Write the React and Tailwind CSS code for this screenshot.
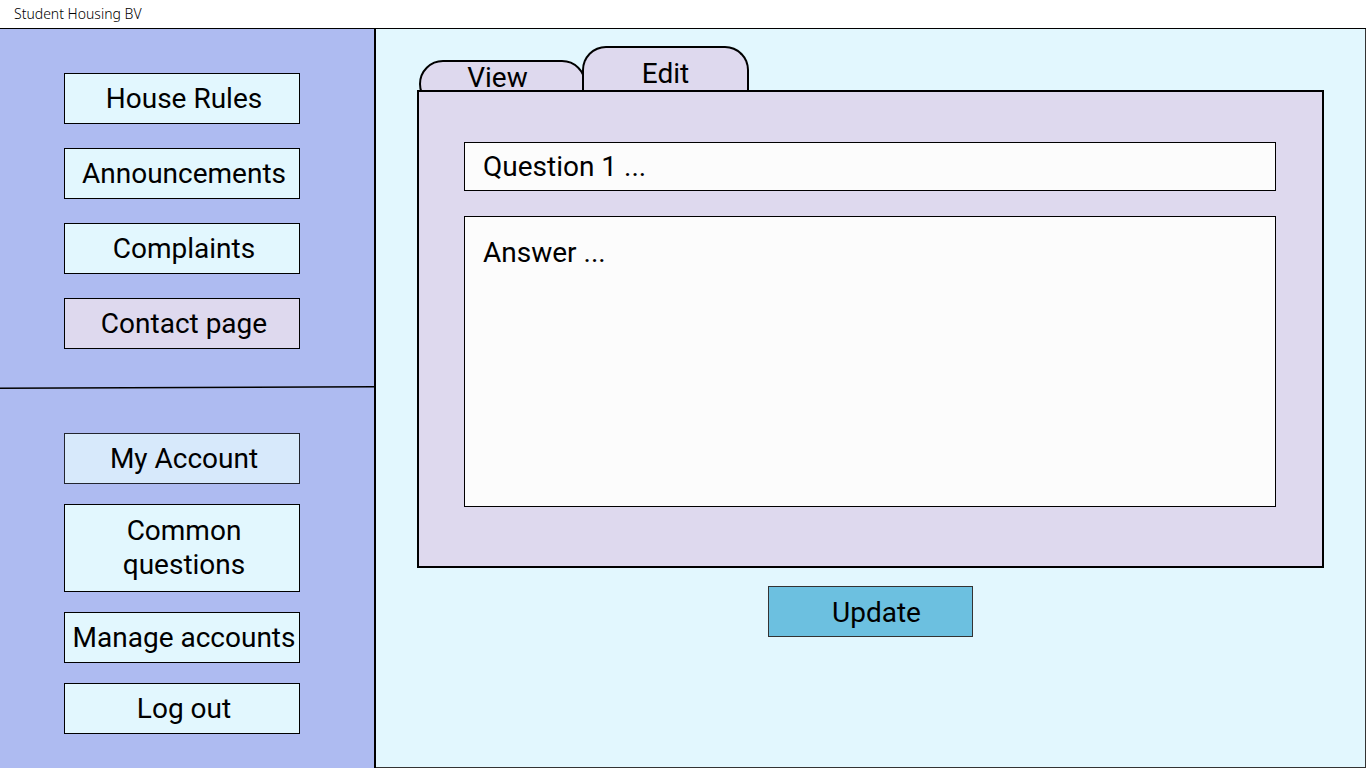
import { useState } from "react";

const mainLinks = [
  { label: "House Rules" },
  { label: "Announcements" },
  { label: "Complaints" },
  { label: "Contact page", tone: "bg-[#ded9ee] border-black" },
];

const accountLinks = [
  { label: "My Account", tone: "bg-[#d7e9fb] border-[#22252f]" },
  { label: "Common questions", tall: true },
  { label: "Manage accounts" },
  { label: "Log out" },
];

function NavButton({ label, tone = "bg-[#e2f7fe] border-black", tall }) {
  return (
    <button
      type="button"
      className={`flex w-full items-center justify-center border text-[28px] leading-[34px] ${
        tall ? "h-[88px] pr-10 pl-11" : "h-[51px] pl-1 whitespace-nowrap"
      } ${tone}`}
    >
      {label}
    </button>
  );
}

function Sidebar() {
  return (
    <nav className="w-[376px] shrink-0 border-r-2 border-black bg-[#aebbf1]">
      <div className="flex flex-col gap-6 pt-11 pr-[74px] pb-9 pl-16">
        {mainLinks.map((link) => (
          <NavButton key={link.label} {...link} />
        ))}
      </div>
      <svg
        className="block h-1 w-full"
        viewBox="0 0 374 4"
        preserveAspectRatio="none"
        aria-hidden="true"
      >
        <line x1="0" y1="3.2" x2="374" y2="1.8" stroke="#000" strokeWidth="1.6" />
      </svg>
      <div className="flex flex-col gap-5 pt-11 pr-[74px] pb-8 pl-16">
        {accountLinks.map((link) => (
          <NavButton key={link.label} {...link} />
        ))}
      </div>
    </nav>
  );
}

function Editor() {
  const [question, setQuestion] = useState("Question 1 ...");
  const [answer, setAnswer] = useState("Answer ...");

  return (
    <main className="flex min-w-0 grow flex-col border-r border-b border-[#333] bg-[#e2f7fe] px-[41px] pt-[17px]">
      <div role="tablist" className="flex h-11 items-start pl-0.5">
        <button
          type="button"
          role="tab"
          aria-selected="false"
          className="mt-3.5 flex h-12 w-[167px] justify-center rounded-[24px] border-2 border-black bg-[#ded9ee] pr-2.5 text-[28px] leading-8"
        >
          View
        </button>
        <button
          type="button"
          role="tab"
          aria-selected="true"
          className="relative -ml-1 h-12 w-[167px] rounded-t-[24px] border-2 border-b-0 border-black bg-[#ded9ee] pt-1.5 text-[28px] leading-[34px]"
        >
          Edit
        </button>
      </div>
      <form className="flex flex-col items-center gap-[18px]" onSubmit={(e) => e.preventDefault()}>
        <div className="relative flex w-full flex-col gap-[25px] border-2 border-black bg-[#ded9ee] pt-[50px] pr-[46px] pb-[59px] pl-[45px]">
          <input
            type="text"
            aria-label="Question"
            value={question}
            onChange={(e) => setQuestion(e.target.value)}
            className="h-[49px] w-full border border-black bg-[#fcfcfc] px-[18px] text-[28px] outline-none"
          />
          <textarea
            aria-label="Answer"
            value={answer}
            onChange={(e) => setAnswer(e.target.value)}
            className="block h-[291px] w-full resize-none border border-black bg-[#fcfcfc] px-[18px] pt-[19px] text-[28px] leading-[34px] outline-none"
          />
        </div>
        <button
          type="submit"
          className="h-[51px] w-[205px] border border-[#333] bg-[#6cc0e0] pt-0.5 pl-3 text-[28px] leading-[34px]"
        >
          Update
        </button>
      </form>
    </main>
  );
}

export default function App() {
  return (
    <div className="flex min-h-screen flex-col bg-white font-['Roboto',sans-serif] text-black">
      <header className="h-[29px] border-b border-black px-3.5">
        <h1 className="font-['Noto_Sans',sans-serif] text-sm leading-7 font-light">
          Student Housing BV
        </h1>
      </header>
      <div className="flex grow">
        <Sidebar />
        <Editor />
      </div>
    </div>
  );
}
